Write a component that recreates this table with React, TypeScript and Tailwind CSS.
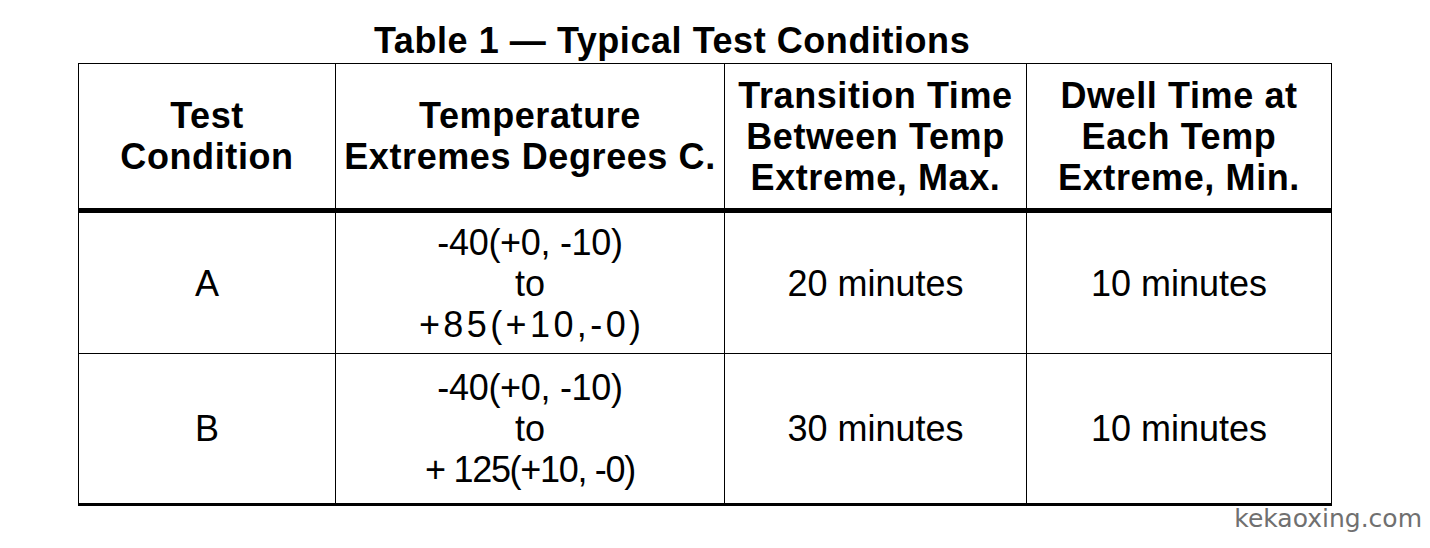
import React from 'react';

const head = [
  ['Test', 'Condition'],
  ['Temperature', 'Extremes Degrees C.'],
  ['Transition Time', 'Between Temp', 'Extreme, Max.'],
  ['Dwell Time at', 'Each Temp', 'Extreme, Min.'],
];

function Lines({ lines, bold }: { lines: React.ReactNode[]; bold?: boolean }) {
  return (
    <>
      {lines.map((l, i) => (
        <div
          key={i}
          className={'whitespace-nowrap leading-[41px] text-[36px] ' + (bold ? 'font-bold tracking-[0.6px]' : 'font-normal')}
        >
          {l}
        </div>
      ))}
    </>
  );
}

export default function App() {
  const cell = 'flex flex-col items-center justify-center border-r border-black text-center';

  return (
    <div className="w-[1430px] h-[548px] bg-white text-black font-['Liberation_Sans',Arial,sans-serif] overflow-hidden">
      <div className="pt-[23px] pl-[374px] mb-[4px]">
        <h1 className="text-[36px] leading-[36px] font-bold tracking-[0.55px] whitespace-nowrap">Table 1 — Typical Test Conditions</h1>
      </div>

      <div className="ml-[78px] w-[1254px] border-l border-t border-black grid grid-cols-[257px_389px_302px_305px]">
        {head.map((h, i) => (
          <div key={i} className={cell + ' h-[149px] border-b-[5px]'}>
            <Lines lines={h} bold />
          </div>
        ))}

        <div className={cell + ' h-[141px] border-b'}>
          <Lines lines={['A']} />
        </div>
        <div className={cell + ' h-[141px] border-b'}>
          <Lines
            lines={[
              <span className="tracking-[-0.3px]">-40(+0, -10)</span>,
              'to',
              <span className="tracking-[3.4px] mr-[-3.4px]">+85(+10,-0)</span>,
            ]}
          />
        </div>
        <div className={cell + ' h-[141px] border-b'}>
          <Lines lines={['20 minutes']} />
        </div>
        <div className={cell + ' h-[141px] border-b'}>
          <Lines lines={['10 minutes']} />
        </div>

        <div className={cell + ' h-[152px] border-b-[3px]'}>
          <Lines lines={['B']} />
        </div>
        <div className={cell + ' h-[152px] border-b-[3px]'}>
          <Lines
            lines={[
              <span className="tracking-[-0.3px]">-40(+0, -10)</span>,
              'to',
              <span className="tracking-[-1.3px]">+ 125(+10, -0)</span>,
            ]}
          />
        </div>
        <div className={cell + ' h-[152px] border-b-[3px]'}>
          <Lines lines={['30 minutes']} />
        </div>
        <div className={cell + ' h-[152px] border-b-[3px]'}>
          <Lines lines={['10 minutes']} />
        </div>
      </div>

      <div className="flex justify-end pr-[8px]">
        <span className="text-[25px] leading-[26px] text-[#707070] font-['DejaVu_Sans',sans-serif]">kekaoxing.com</span>
      </div>
    </div>
  );
}
